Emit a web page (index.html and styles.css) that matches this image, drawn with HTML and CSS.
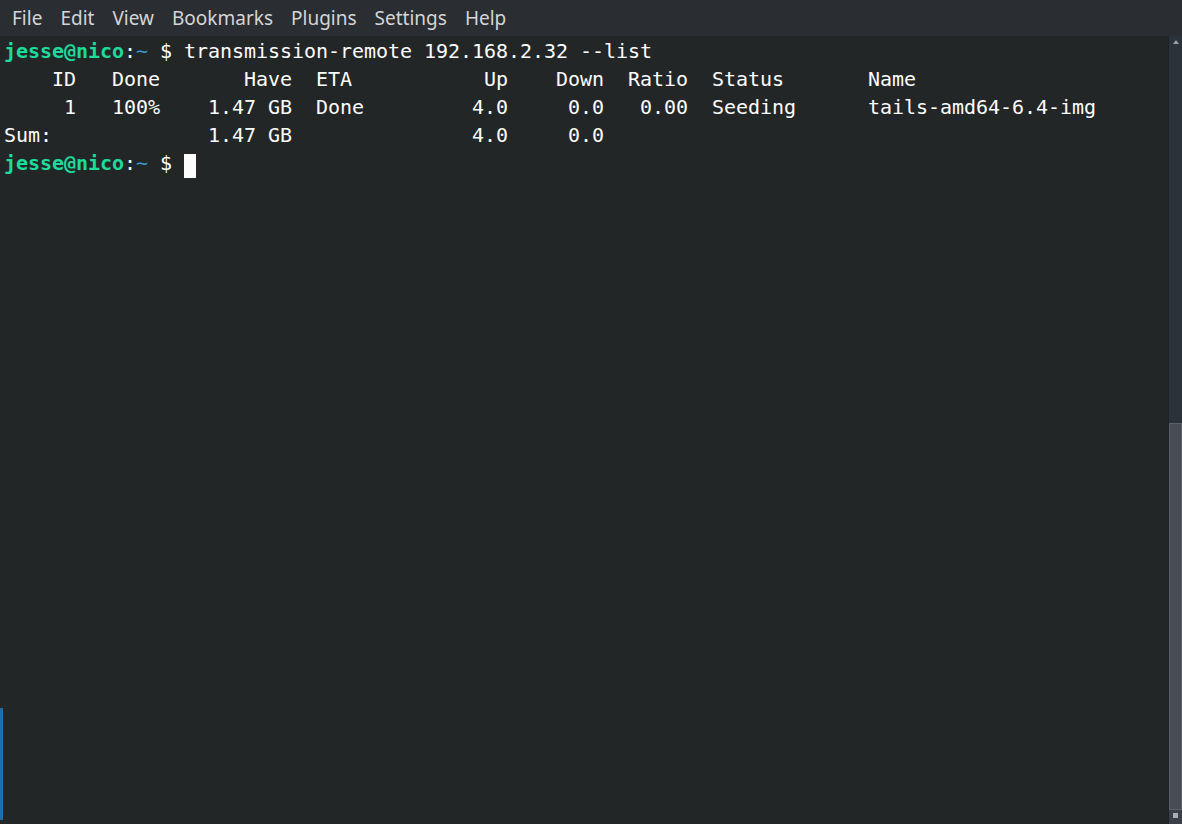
FILE: index.html
```html
<!DOCTYPE html>
<html>
<head>
<meta charset="utf-8">
<link rel="stylesheet" href="styles.css">
</head>
<body>
<div class="window">
  <nav class="menubar">
    <span class="menu-item">File</span>
    <span class="menu-item">Edit</span>
    <span class="menu-item">View</span>
    <span class="menu-item">Bookmarks</span>
    <span class="menu-item">Plugins</span>
    <span class="menu-item">Settings</span>
    <span class="menu-item">Help</span>
  </nav>
  <div class="main">
    <div class="terminal">
<pre class="screen"><span class="user">jesse@nico</span>:<span class="path">~</span> $ transmission-remote 192.168.2.32 --list
    ID   Done       Have  ETA           Up    Down  Ratio  Status       Name
     1   100%    1.47 GB  Done         4.0     0.0   0.00  Seeding      tails-amd64-6.4-img
Sum:             1.47 GB               4.0     0.0
<span class="user">jesse@nico</span>:<span class="path">~</span> $ <span class="cursor"> </span></pre>
      <div class="activity"></div>
    </div>
    <div class="scrollbar">
      <div class="arrow arrow-up"></div>
      <div class="track">
        <div class="thumb"></div>
      </div>
      <div class="arrow arrow-down"></div>
    </div>
  </div>
</div>
</body>
</html>
```
FILE: styles.css
```css
html, body {
  margin: 0;
  padding: 0;
  background: #232627;
}
.window {
  width: 1182px;
  height: 824px;
  display: flex;
  flex-direction: column;
  overflow: hidden;
}
.menubar {
  height: 36px;
  flex: none;
  background: #2a2e32;
  display: flex;
  align-items: center;
  padding-left: 3px;
  font-family: "Noto Sans", sans-serif;
  font-size: 19px;
  color: #d3d5d7;
}
.menu-item {
  padding: 0 9px;
  line-height: 36px;
}
.main {
  flex: 1;
  display: flex;
  min-height: 0;
}
.terminal {
  flex: 1;
  position: relative;
  background: #232627;
}
.screen {
  margin: 0;
  padding: 1px 0 0 4px;
  font-family: "DejaVu Sans Mono", monospace;
  font-size: 20px;
  letter-spacing: -0.04px;
  line-height: 28px;
  color: #fcfcfc;
}
.user {
  color: #1cdc9a;
  font-weight: bold;
}
.path {
  color: #3d9fcf;
}
.cursor {
  display: inline-block;
  width: 12px;
  height: 24px;
  background: #fcfcfc;
  vertical-align: -5px;
}
.activity {
  position: absolute;
  left: 0;
  top: 672px;
  width: 3px;
  height: 112px;
  background: #1e6fa8;
}
.scrollbar {
  width: 13px;
  flex: none;
  display: flex;
  flex-direction: column;
  background: #2a3339;
  border-left: 1px solid #1f2326;
}
.arrow {
  height: 14px;
  flex: none;
  position: relative;
}
.arrow-up::after {
  content: "";
  position: absolute;
  left: 4px;
  top: 4px;
  border-left: 3px solid transparent;
  border-right: 3px solid transparent;
  border-bottom: 4px solid #9aa1a6;
}
.arrow-down {
  background: #3a4146;
}
.arrow-down::after {
  content: "";
  position: absolute;
  left: 4px;
  top: 3px;
  width: 5px;
  height: 5px;
  background: #a8aeb3;
}
.track {
  flex: 1;
  display: flex;
  flex-direction: column;
  justify-content: flex-end;
}
.thumb {
  height: 387px;
  background: #474e53;
  border: 1px solid #5a6166;
  box-sizing: border-box;
}
```
